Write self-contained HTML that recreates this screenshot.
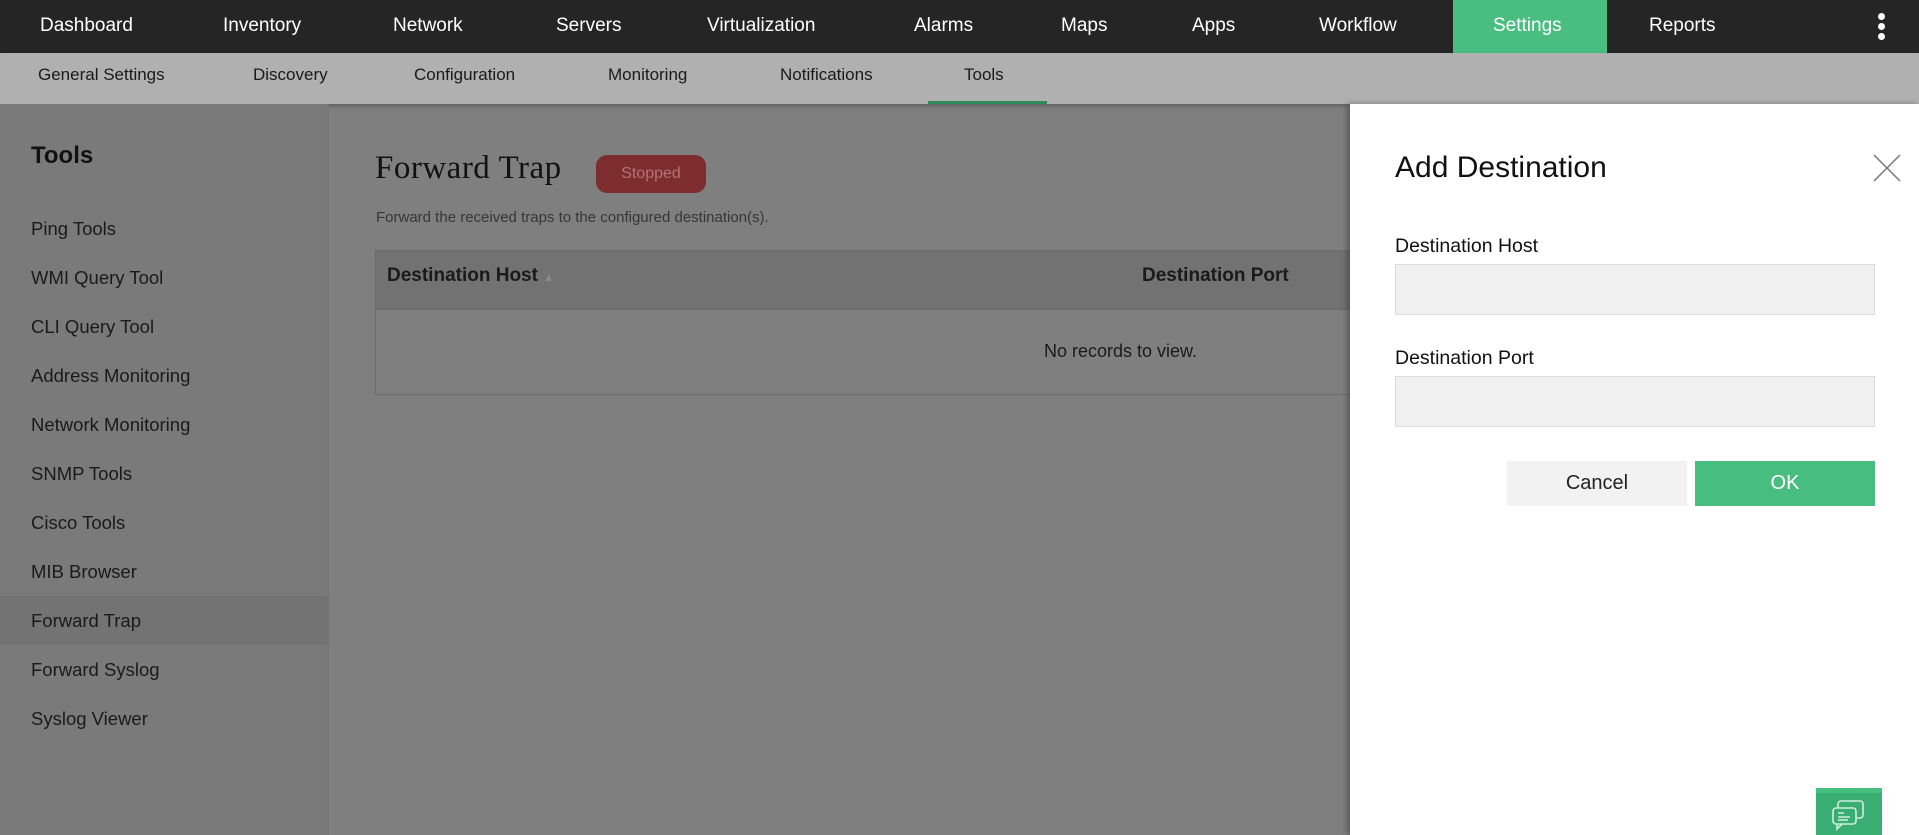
<!DOCTYPE html>
<html><head><meta charset="utf-8"><style>
*{margin:0;padding:0;box-sizing:border-box}
body{width:1919px;height:835px;overflow:hidden;background:#7f7f7f;font-family:"Liberation Sans",sans-serif;position:relative}
.a{position:absolute;white-space:nowrap}
#top{left:0;top:0;width:1919px;height:53px;background:#252525}
.tn{color:#fff;font-size:19px;top:15px}
#sub{left:0;top:53px;width:1919px;height:51px;background:#b0b0b0;box-shadow:0 2px 4px rgba(0,0,0,.25)}
.sn{color:#1a1a1a;font-size:17px;top:65px}
#side{left:0;top:104px;width:329px;height:731px;background:#7a7a7a;border-right:2px solid #767676}
.si{left:31px;font-size:18.5px;color:#1a1a1a}
#panel{left:1350px;top:104px;width:569px;height:731px;background:#fff;box-shadow:-3px 0 6px rgba(0,0,0,.3)}
.lbl{font-size:19.5px;color:#111;left:1395px}
.inp{left:1395px;width:480px;height:51px;background:#f0f0f0;border:1px solid #dcdcdc}
</style></head><body>
<div class="a" id="top"></div>
<div class="a" style="left:1453px;top:0;width:154px;height:53px;background:#49be80"></div>
<div class="a tn" style="left:40px">Dashboard</div>
<div class="a tn" style="left:223px">Inventory</div>
<div class="a tn" style="left:393px">Network</div>
<div class="a tn" style="left:556px">Servers</div>
<div class="a tn" style="left:707px">Virtualization</div>
<div class="a tn" style="left:914px">Alarms</div>
<div class="a tn" style="left:1061px">Maps</div>
<div class="a tn" style="left:1192px">Apps</div>
<div class="a tn" style="left:1319px">Workflow</div>
<div class="a tn" style="left:1493px">Settings</div>
<div class="a tn" style="left:1649px">Reports</div>
<div class="a" style="left:1878px;top:13px;width:7px;height:7px;border-radius:50%;background:#fff"></div>
<div class="a" style="left:1878px;top:23px;width:7px;height:7px;border-radius:50%;background:#fff"></div>
<div class="a" style="left:1878px;top:33px;width:7px;height:7px;border-radius:50%;background:#fff"></div>

<div class="a" id="sub"></div>
<div class="a sn" style="left:38px">General Settings</div>
<div class="a sn" style="left:253px">Discovery</div>
<div class="a sn" style="left:414px">Configuration</div>
<div class="a sn" style="left:608px">Monitoring</div>
<div class="a sn" style="left:780px">Notifications</div>
<div class="a sn" style="left:964px">Tools</div>
<div class="a" style="left:928px;top:101px;width:119px;height:3px;background:#2f8a5a"></div>

<div class="a" id="side"></div>
<div class="a" style="left:31px;top:142px;font-size:24px;font-weight:bold;color:#111">Tools</div>
<div class="a" style="left:0;top:596px;width:329px;height:49px;background:#737373"></div>
<div class="a si" style="top:218px">Ping Tools</div>
<div class="a si" style="top:267px">WMI Query Tool</div>
<div class="a si" style="top:316px">CLI Query Tool</div>
<div class="a si" style="top:365px">Address Monitoring</div>
<div class="a si" style="top:414px">Network Monitoring</div>
<div class="a si" style="top:463px">SNMP Tools</div>
<div class="a si" style="top:512px">Cisco Tools</div>
<div class="a si" style="top:561px">MIB Browser</div>
<div class="a si" style="top:610px">Forward Trap</div>
<div class="a si" style="top:659px">Forward Syslog</div>
<div class="a si" style="top:708px">Syslog Viewer</div>

<div class="a" style="left:375px;top:150px;font-family:'Liberation Serif',serif;font-size:33px;color:#111;letter-spacing:0.5px">Forward Trap</div>
<div class="a" style="left:596px;top:155px;width:110px;height:38px;border-radius:11px;background:#7d2d2d;color:#b57272;font-size:16px;text-align:center;line-height:38px">Stopped</div>
<div class="a" style="left:376px;top:209px;font-size:15px;color:#363636">Forward the received traps to the configured destination(s).</div>
<div class="a" style="left:375px;top:250px;width:1000px;height:145px;border:1px solid #6c6c6c"></div>
<div class="a" style="left:376px;top:251px;width:1000px;height:59px;background:#727272;border-bottom:1px solid #686868"></div>
<div class="a" style="left:387px;top:265px;font-size:19px;font-weight:bold;color:#1a1a1a">Destination Host <span style="color:#8a8a8a;font-size:11px">▲</span></div>
<div class="a" style="left:1142px;top:265px;font-size:19px;font-weight:bold;color:#1a1a1a">Destination Port</div>
<div class="a" style="left:1044px;top:341px;font-size:18px;color:#1a1a1a">No records to view.</div>

<div class="a" id="panel"></div>
<div class="a" style="left:1395px;top:151px;font-size:30px;color:#111">Add Destination</div>
<svg class="a" style="left:1872px;top:153px" width="30" height="30"><path d="M2 2L28 28M28 2L2 28" stroke="#777" stroke-width="1.5"/></svg>
<div class="a lbl" style="top:235px">Destination Host</div>
<div class="a inp" style="top:264px"></div>
<div class="a lbl" style="top:347px">Destination Port</div>
<div class="a inp" style="top:376px"></div>
<div class="a" style="left:1507px;top:461px;width:180px;height:45px;background:#f2f2f2;color:#222;font-size:20px;text-align:center;line-height:45px">Cancel</div>
<div class="a" style="left:1695px;top:461px;width:180px;height:45px;background:#47be80;color:#fff;font-size:20px;text-align:center;line-height:45px">OK</div>

<div class="a" style="left:1816px;top:788px;width:66px;height:47px;background:#3aae72;border-top:5px solid #45c07f"></div>
<svg class="a" style="left:1832px;top:799px" width="34" height="34" fill="none" stroke="#cfeedd" stroke-width="1.6"><rect x="6" y="2" width="25" height="17" rx="3"/><rect x="1" y="9" width="23" height="16" rx="3" fill="#3aae72"/><path d="M5 25v5l5-5"/><path d="M6 14h6M6 18h12M6 21h10"/></svg>
</body></html>
